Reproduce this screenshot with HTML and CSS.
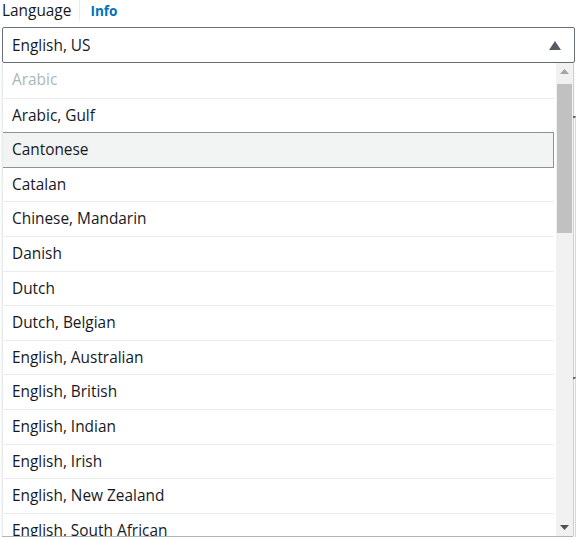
FILE: index.html
```html
<!DOCTYPE html>
<html>
<head>
<meta charset="utf-8">
<link rel="stylesheet" href="styles.css">
</head>
<body>
<div class="backdrop">
  <div class="bg-panel bg-one"></div>
  <div class="bg-panel bg-two"></div>
</div>
<div class="field">
  <div class="label-row">
    <span class="label">Language</span>
    <span class="sep"></span>
    <a class="info">Info</a>
  </div>
  <div class="select-wrap">
    <div class="select">
      <span class="value">English, US</span>
      <svg class="caret" width="12" height="9" viewBox="0 0 12 9"><path d="M6 0 L12 9 L0 9 Z" fill="#545b64"/></svg>
    </div>
    <div class="dropdown">
      <ul class="options">
        <li class="opt disabled">Arabic</li>
        <li class="opt">Arabic, Gulf</li>
        <li class="opt active">Cantonese</li>
        <li class="opt">Catalan</li>
        <li class="opt">Chinese, Mandarin</li>
        <li class="opt">Danish</li>
        <li class="opt">Dutch</li>
        <li class="opt">Dutch, Belgian</li>
        <li class="opt">English, Australian</li>
        <li class="opt">English, British</li>
        <li class="opt">English, Indian</li>
        <li class="opt">English, Irish</li>
        <li class="opt">English, New Zealand</li>
        <li class="opt">English, South African</li>
      </ul>
      <div class="scrollbar">
        <div class="sb-btn up"><svg width="9" height="5" viewBox="0 0 9 5"><path d="M4.5 0 L9 5 L0 5 Z" fill="#a3a3a3"/></svg></div>
        <div class="sb-track"><div class="sb-thumb"></div></div>
        <div class="sb-btn down"><svg width="9" height="5" viewBox="0 0 9 5"><path d="M0 0 L9 0 L4.5 5 Z" fill="#505050"/></svg></div>
      </div>
    </div>
  </div>
</div>
</body>
</html>
```
FILE: styles.css
```css
* { box-sizing: border-box; }
html, body { margin: 0; padding: 0; background: #fff; }
html { overflow: hidden; }
body {
  width: 580px;
  height: 537px;
  overflow: hidden;
  font-family: "Open Sans", "Noto Sans", sans-serif;
  color: #16191f;
  position: relative;
}
.backdrop { position: absolute; inset: 0; overflow: hidden; }
.bg-panel {
  position: absolute;
  left: 300px;
  right: 4px;
  border-top: 2px solid #687078;
  border-right: 1px solid #d5dbdb;
}
.bg-one { top: 116px; height: 262px; }
.bg-two { top: 377px; height: 160px; }
.field {
  position: relative;
  padding: 0 5px 0 2px;
}
.label-row {
  display: flex;
  align-items: center;
  height: 21px;
}
.label {
  font-size: 15.4px;
  line-height: 21px;
  color: #16191f;
}
.sep {
  width: 1px;
  height: 21px;
  background: #eaeded;
  margin: 0 10px 0 8px;
}
.info {
  font-size: 13.6px;
  font-weight: 700;
  color: #0073bb;
  line-height: 21px;
}
.select-wrap {
  position: relative;
  margin-top: 6px;
}
.select {
  height: 36px;
  border: 1px solid #687078;
  border-radius: 2px;
  display: flex;
  align-items: center;
  justify-content: space-between;
  padding: 0 13px 0 9px;
  background: #fff;
}
.value { font-size: 15.4px; }
.caret { display: block; margin-top: 1px; }
.dropdown {
  position: absolute;
  top: 36px;
  left: 0;
  width: 571px;
  height: 473px;
  display: flex;
  background: #fff;
  border-left: 1px solid #eaeded;
  box-shadow: 0 1px 1px rgba(0,22,28,0.3), 1px 0 1px rgba(0,22,28,0.15);
}
.options {
  list-style: none;
  margin: 0 2px 0 0;
  padding: 0;
  flex: 1;
  overflow: hidden;
}
.opt {
  height: 34.6px;
  border-bottom: 1px solid #eaeded;
  padding: 0 0 0 9px;
  font-size: 15.4px;
  line-height: 33px;
  white-space: nowrap;
  color: #16191f;
}
.opt:first-child { height: 35.6px; line-height: 34px; }
.opt.disabled { color: #aab7b8; }
.opt.active {
  background: #f2f3f3;
  border: 1px solid #879596;
  margin-top: -1px;
  height: 35.6px;
  padding-left: 9px;
  margin-left: -1px;
}
.scrollbar {
  width: 17px;
  background: #f1f1f1;
  display: flex;
  flex-direction: column;
}
.sb-btn {
  height: 17px;
  display: flex;
  align-items: center;
  justify-content: center;
}
.sb-track { flex: 1; position: relative; }
.sb-thumb {
  position: absolute;
  left: 1px;
  right: 1px;
  top: 4px;
  height: 149px;
  background: #c1c1c1;
}
```
